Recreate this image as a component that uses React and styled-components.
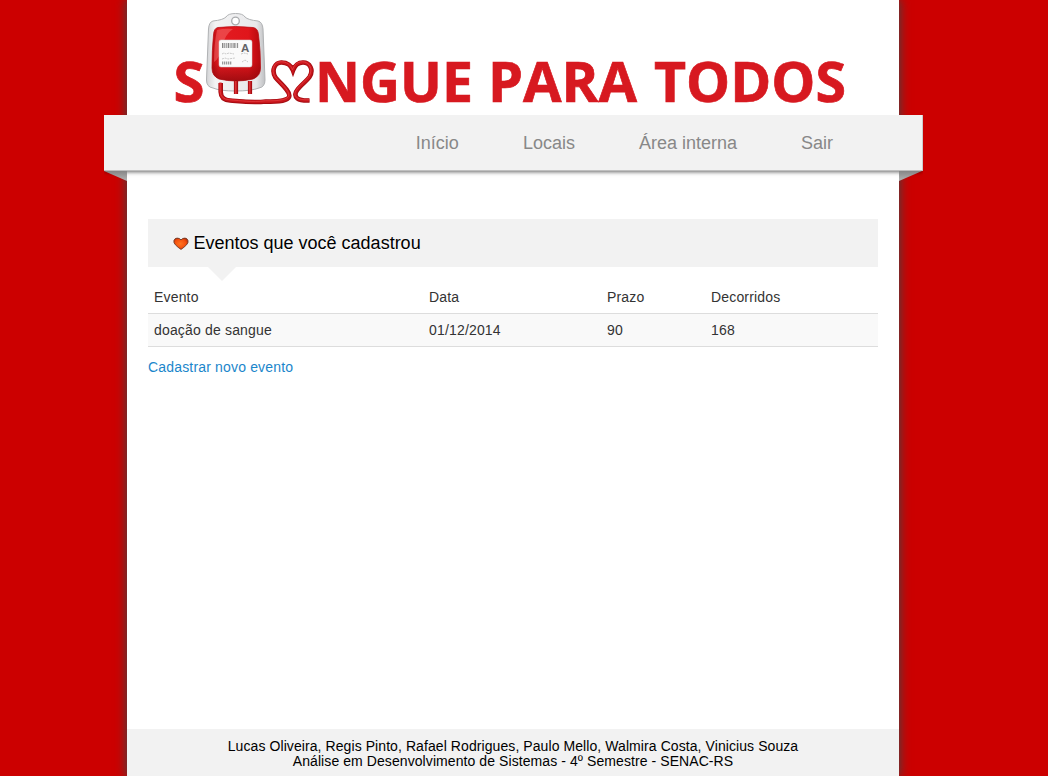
import React from 'react';
import styled, { createGlobalStyle } from 'styled-components';

const GlobalStyle = createGlobalStyle`
  * { box-sizing: border-box; }
  body {
    margin: 0;
    background: #cc0000;
    font-family: "Liberation Sans", Arial, sans-serif;
    font-size: 14px;
    color: #333;
    overflow: hidden;
  }
`;

const Page = styled.div`
  display: flex;
  flex-direction: column;
  width: 772px;
  height: 776px;
  margin-left: 127px;
  background: #fff;
  box-shadow: 0 0 10px 1px #444;
`;

const Header = styled.header`
  height: 115px;
  flex: none;
`;

const LogoArt = styled.svg`
  display: block;
  overflow: visible;
`;

const Ribbon = styled.nav`
  position: relative;
  display: flex;
  flex: none;
  justify-content: flex-end;
  align-items: center;
  gap: 64px;
  height: 55px;
  margin: 0 -24px 0 -23px;
  padding-right: 89px;
  background: #f2f2f2;
  border-right: 1px solid #ccc;
  box-shadow: 0 1px 0 #bfbfbf, 0 3px 4px -1px rgba(0, 0, 0, 0.6);
  clip-path: inset(0 0 -12px 0);
`;

const Fold = styled.span`
  position: absolute;
  top: 56px;
  ${(p) => (p.$side === 'left' ? 'left: 0;' : 'right: 0;')}
  width: 23px;
  height: 10px;
  background: linear-gradient(#868686, #b4b4b4);
  clip-path: ${(p) =>
    p.$side === 'left' ? 'polygon(0 0, 100% 0, 100% 100%)' : 'polygon(0 0, 100% 0, 0 100%)'};
`;

const NavLink = styled.a`
  font-size: 18px;
  line-height: 20px;
  color: #888;
`;

const Content = styled.main`
  flex: 1;
  padding: 49px 21px 0;
`;

const Title = styled.h1`
  position: relative;
  display: flex;
  align-items: center;
  gap: 4.5px;
  height: 48px;
  margin: 0 0 14px;
  padding-left: 25px;
  background: #f2f2f2;
  color: #000;
  font-size: 18px;
  font-weight: 400;
  text-shadow: 0 1px 0 #fff;

  &::after {
    content: "";
    position: absolute;
    top: 100%;
    left: 60px;
    border: 14px solid transparent;
    border-top-color: #f2f2f2;
    border-bottom: 0;
  }
`;

const Table = styled.div`
  display: flex;
  flex-direction: column;
`;

const Row = styled.div`
  display: grid;
  grid-template-columns: 275px 178px 104px 1fr;
  height: 33px;
  padding-left: 6px;
  line-height: 32px;
  letter-spacing: 0.17px;
  border-bottom: 1px solid #ddd;
  background: ${(p) => (p.$striped ? '#f9f9f9' : 'transparent')};
`;

const NewEvent = styled.a`
  display: block;
  margin-top: 10px;
  line-height: 20px;
  letter-spacing: 0.17px;
  color: #1b86cb;
`;

const Footer = styled.footer`
  height: 47px;
  flex: none;
  padding-top: 10px;
  background: #f2f2f2;
  color: #000;
  line-height: 15px;
  letter-spacing: 0.08px;
  text-align: center;
`;

function Logo() {
  const word = {
    fontFamily: '"Open Sans", "Noto Sans", sans-serif',
    fontWeight: 700,
    fontSize: 56,
    fill: '#d71920',
    stroke: '#d71920',
    strokeWidth: 0.7,
    lengthAdjust: 'spacingAndGlyphs',
  };
  const tube =
    'M220.700 83V92Q221 100 230 100.500C242 101.500 252 103 266 101.500C280 102 289 100 289.300 96C290 91 280 83 275.500 77.500C271 70 275 62.500 281.500 62.500C287 62.500 291 65 293 70.500C295 65 298 62.500 303 62.500C310 62.500 314 70 309.500 77C306 82 299 86 296 92C294 97 297 101 309.500 100.500';
  return (
    <LogoArt width="772" height="115" viewBox="127 0 772 115" role="img">
      <defs>
        <linearGradient id="plastic" x1="0" x2="1">
          <stop offset="0" stopColor="#d2d3d5" />
          <stop offset=".15" stopColor="#f3f3f4" />
          <stop offset=".85" stopColor="#e8e8ea" />
          <stop offset="1" stopColor="#bfc0c2" />
        </linearGradient>
        <linearGradient id="blood" x1="0" x2="1">
          <stop offset="0" stopColor="#b80b10" />
          <stop offset=".15" stopColor="#e31b21" />
          <stop offset=".75" stopColor="#e0151b" />
          <stop offset="1" stopColor="#b5090e" />
        </linearGradient>
        <linearGradient id="shade" x1="0" x2="0" y1="0" y2="1">
          <stop offset=".65" stopColor="#8d080c" stopOpacity="0" />
          <stop offset="1" stopColor="#8d080c" stopOpacity=".75" />
        </linearGradient>
      </defs>
      <text x="173.500" y="102" textLength="31" {...word}>S</text>
      <text x="315" y="102" textLength="158" {...word}>NGUE</text>
      <text x="488" y="102" textLength="149" {...word}>PARA</text>
      <text x="654" y="102" textLength="192" {...word}>TODOS</text>
      <path
        d="M213 21Q223 20 226 17Q228 13.500 235.500 13.500Q243 13.500 245 17Q248 20 258 21Q262.500 22 263 29L265 80Q265 87 259 88Q251 91 235.500 91Q220 91 213 88Q206.500 87 206.500 80L208.500 29Q209 22 213 21Z"
        fill="url(#plastic)" stroke="#b0b2b4" strokeWidth="1"
      />
      <circle cx="235.500" cy="21" r="3.800" fill="#fff" stroke="#a9abad" strokeWidth="1.300" />
      <path
        id="bag"
        d="M218 27.500Q235 25.500 253 27.500Q258 28 258.500 35Q260.500 50 260.500 68Q260.500 76 253 79Q236 83 219 79Q212 76 212 68Q212 50 213.500 35Q214 28 218 27.500Z"
        fill="url(#blood)" stroke="#b81218" strokeWidth=".8"
      />
      <path
        d="M218 27.500Q235 25.500 253 27.500Q258 28 258.500 35Q260.500 50 260.500 68Q260.500 76 253 79Q236 83 219 79Q212 76 212 68Q212 50 213.500 35Q214 28 218 27.500Z"
        fill="url(#shade)"
      />
      <path d="M217 30Q225 28 233 29Q225 34 222 47Q220 58 214 62Q214 44 217 30Z" fill="#fb8583" opacity=".4" />
      <path d="M236 81V94M250 81V94" stroke="#a80c12" strokeWidth="4.200" />
      <path d="M235.700 81V94M249.700 81V94" stroke="#dc3236" strokeWidth="1.800" />
      <path d={tube} fill="none" stroke="#a30d13" strokeWidth="4.600" />
      <path d={tube} fill="none" stroke="#c9151b" strokeWidth="3" transform="translate(-.2 -.2)" />
      <path d={tube} fill="none" stroke="#e8484b" strokeWidth=".9" opacity=".75" transform="translate(-.5 -.7)" />
      <rect x="219" y="40" width="33" height="27" rx="2" fill="#fafafa" stroke="#d0d0d0" strokeWidth=".5" />
      <path
        d="M222 45.500H239"
        stroke="#858585" strokeWidth="5" strokeDasharray="1.400 .7 .7 .9 1 1"
      />
      <path d="M222 63H232" stroke="#999" strokeWidth="3" strokeDasharray="1.300 .7" />
      <path d="M222 54L224 53L226 54L229 53L234 54M222 59L225 58L228 59L235 58M241 54L244 53L248 54M242 62L245 60L248 62" fill="none" stroke="#c4c4c4" strokeWidth=".9" strokeDasharray="2 .8" />
      <text x="241" y="51.500" fontFamily="Liberation Sans, sans-serif" fontWeight="700" fontSize="11.500" fill="#626366">A</text>
    </LogoArt>
  );
}

function Heart() {
  return (
    <svg width="16" height="16" viewBox="0 0 16 16">
      <defs>
        <radialGradient id="glow" cx=".45" cy=".5" r=".6">
          <stop offset="0" stopColor="#ff7420" />
          <stop offset=".65" stopColor="#f4500e" />
          <stop offset="1" stopColor="#c02c06" />
        </radialGradient>
      </defs>
      <path
        d="M8 14.400Q5 12.500 2.400 9.800Q.5 7.600.9 5.700Q1.600 3.300 4 3.100Q6.500 3 8 4.900Q9.500 3 12 3.100Q14.400 3.300 15 5.700Q15.500 7.600 13.600 9.800Q11 12.500 8 14.400Z"
        fill="url(#glow)" stroke="#6d3524" strokeWidth=".9"
      />
    </svg>
  );
}

const links = ['Início', 'Locais', 'Área interna', 'Sair'];
const rows = [
  ['Evento', 'Data', 'Prazo', 'Decorridos'],
  ['doação de sangue', '01/12/2014', '90', '168'],
];

export default function App() {
  return (
    <>
      <GlobalStyle />
      <Page>
        <Header>
          <Logo />
        </Header>
        <Ribbon>
          <Fold $side="left" />
          {links.map((label) => (
            <NavLink key={label}>{label}</NavLink>
          ))}
          <Fold $side="right" />
        </Ribbon>
        <Content>
          <Title>
            <Heart />
            Eventos que você cadastrou
          </Title>
          <Table>
            {rows.map((cells, i) => (
              <Row key={cells[0]} $striped={i % 2 === 1}>
                {cells.map((cell) => (
                  <span key={cell}>{cell}</span>
                ))}
              </Row>
            ))}
          </Table>
          <NewEvent>Cadastrar novo evento</NewEvent>
        </Content>
        <Footer>
          Lucas Oliveira, Regis Pinto, Rafael Rodrigues, Paulo Mello, Walmira Costa, Vinicius Souza
          <br />
          Análise em Desenvolvimento de Sistemas - 4º Semestre - SENAC-RS
        </Footer>
      </Page>
    </>
  );
}
